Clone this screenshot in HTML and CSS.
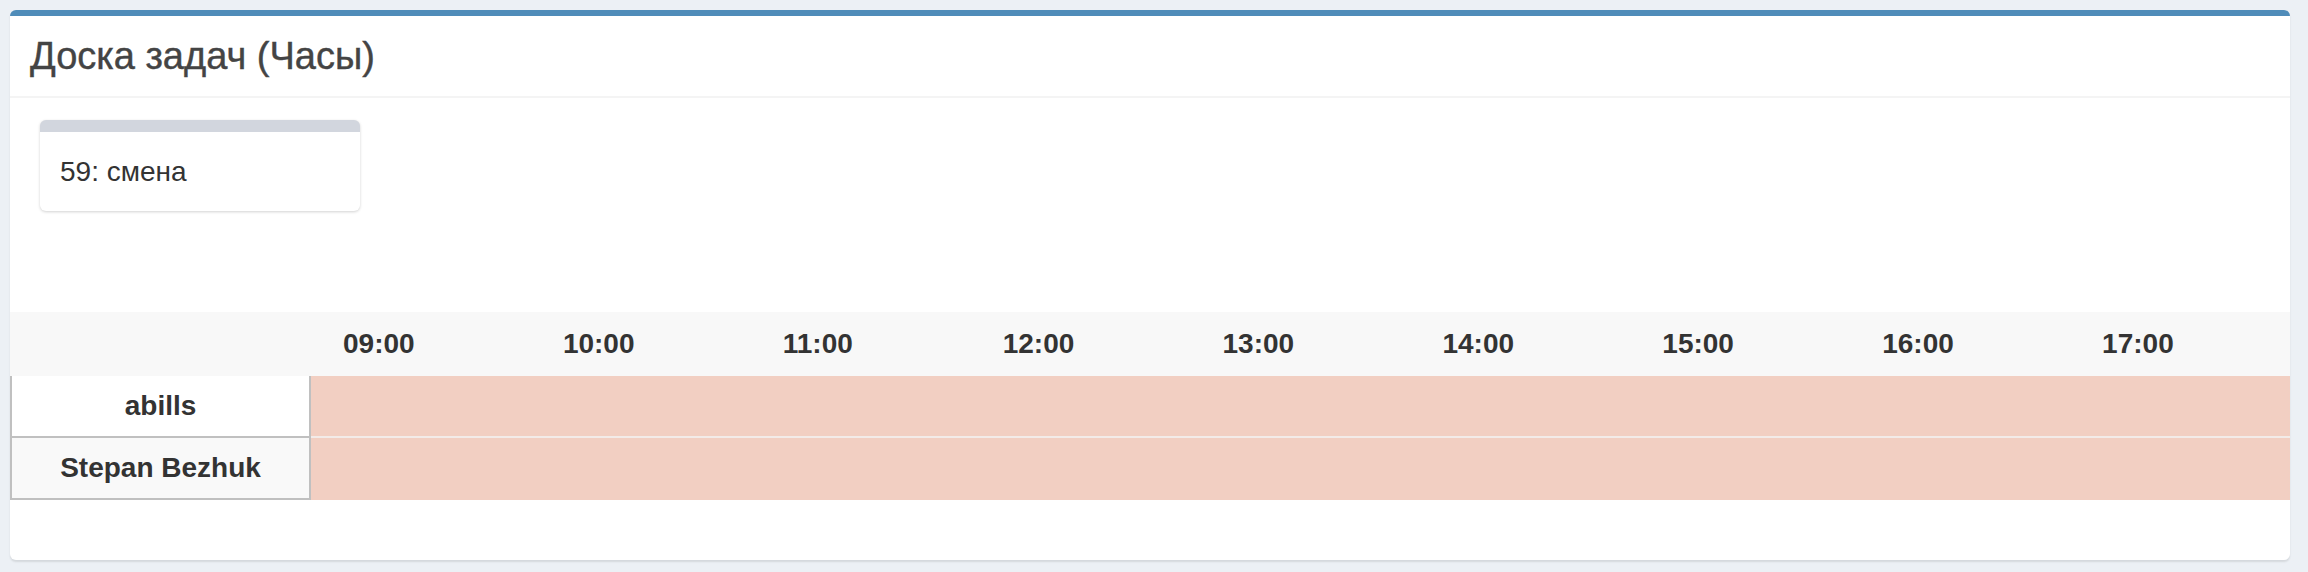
FILE: index.html
```html
<!DOCTYPE html>
<html lang="ru">
<head>
<meta charset="utf-8">
<title>Доска задач (Часы)</title>
<link rel="stylesheet" href="styles.css">
</head>
<body>
<div class="box">
  <div class="box-header">
    <h3 class="box-title">Доска задач (Часы)</h3>
  </div>
  <div class="board">
    <div class="task-card">
      <div class="task-card-body">59: смена</div>
    </div>
  </div>
  <div class="timeline">
    <div class="tl-head tl-corner"></div>
    <div class="tl-head">09:00</div>
    <div class="tl-head">10:00</div>
    <div class="tl-head">11:00</div>
    <div class="tl-head">12:00</div>
    <div class="tl-head">13:00</div>
    <div class="tl-head">14:00</div>
    <div class="tl-head">15:00</div>
    <div class="tl-head">16:00</div>
    <div class="tl-head">17:00</div>

    <div class="tl-name">abills</div>
    <div class="tl-bar tl-bar-sep"></div>

    <div class="tl-name tl-name-alt">Stepan Bezhuk</div>
    <div class="tl-bar"></div>
  </div>
  <div class="box-footer-space"></div>
</div>
</body>
</html>
```
FILE: styles.css
```css
* { box-sizing: border-box; }

html, body {
  margin: 0;
  padding: 0;
}

body {
  background: #ecf0f5;
  padding: 10px 18px 10px 10px;
  font-family: "Liberation Sans", Arial, Helvetica, sans-serif;
  color: #333;
}

.box {
  width: 2280px;
  background: #fff;
  border-top: 6px solid #4f8cb9;
  border-radius: 6px;
  box-shadow: 0 2px 2px rgba(0, 0, 0, 0.1);
  overflow: hidden;
}

.box-header {
  height: 82px;
  padding: 20px;
  border-bottom: 2px solid #f4f4f4;
}

.box-title {
  margin: 0;
  font-size: 38px;
  line-height: 40px;
  font-weight: normal;
  color: #444;
  -webkit-text-stroke: 0.4px #444;
}

.board {
  height: 214px;
  padding: 22px 30px 0;
}

.task-card {
  width: 320px;
  border-top: 12px solid #d2d6de;
  border-radius: 6px;
  background: #fff;
  box-shadow: 0 1px 3px rgba(0, 0, 0, 0.18);
}

.task-card-body {
  height: 79px;
  padding: 0 20px;
  display: flex;
  align-items: center;
  font-size: 28px;
  color: #333;
}

.timeline {
  display: grid;
  grid-template-columns: 301px repeat(9, 1fr);
}

.tl-head {
  height: 64px;
  background: #f8f8f8;
  display: flex;
  align-items: center;
  padding-left: 32px;
  font-size: 28px;
  font-weight: bold;
  color: #333;
}

.tl-corner {
  padding: 0;
}

.tl-name {
  height: 62px;
  border-left: 2px solid #c0c0c0;
  border-right: 2px solid #c0c0c0;
  border-bottom: 2px solid #c0c0c0;
  background: #fff;
  display: flex;
  align-items: center;
  justify-content: center;
  font-size: 28px;
  font-weight: bold;
  color: #333;
}

.tl-name-alt {
  background: #f9f9f9;
}

.tl-bar {
  grid-column: 2 / -1;
  height: 62px;
  background: #f2cfc2;
}

.tl-bar-sep {
  border-bottom: 2px solid #f3ebe8;
}

.box-footer-space {
  height: 60px;
}
```
